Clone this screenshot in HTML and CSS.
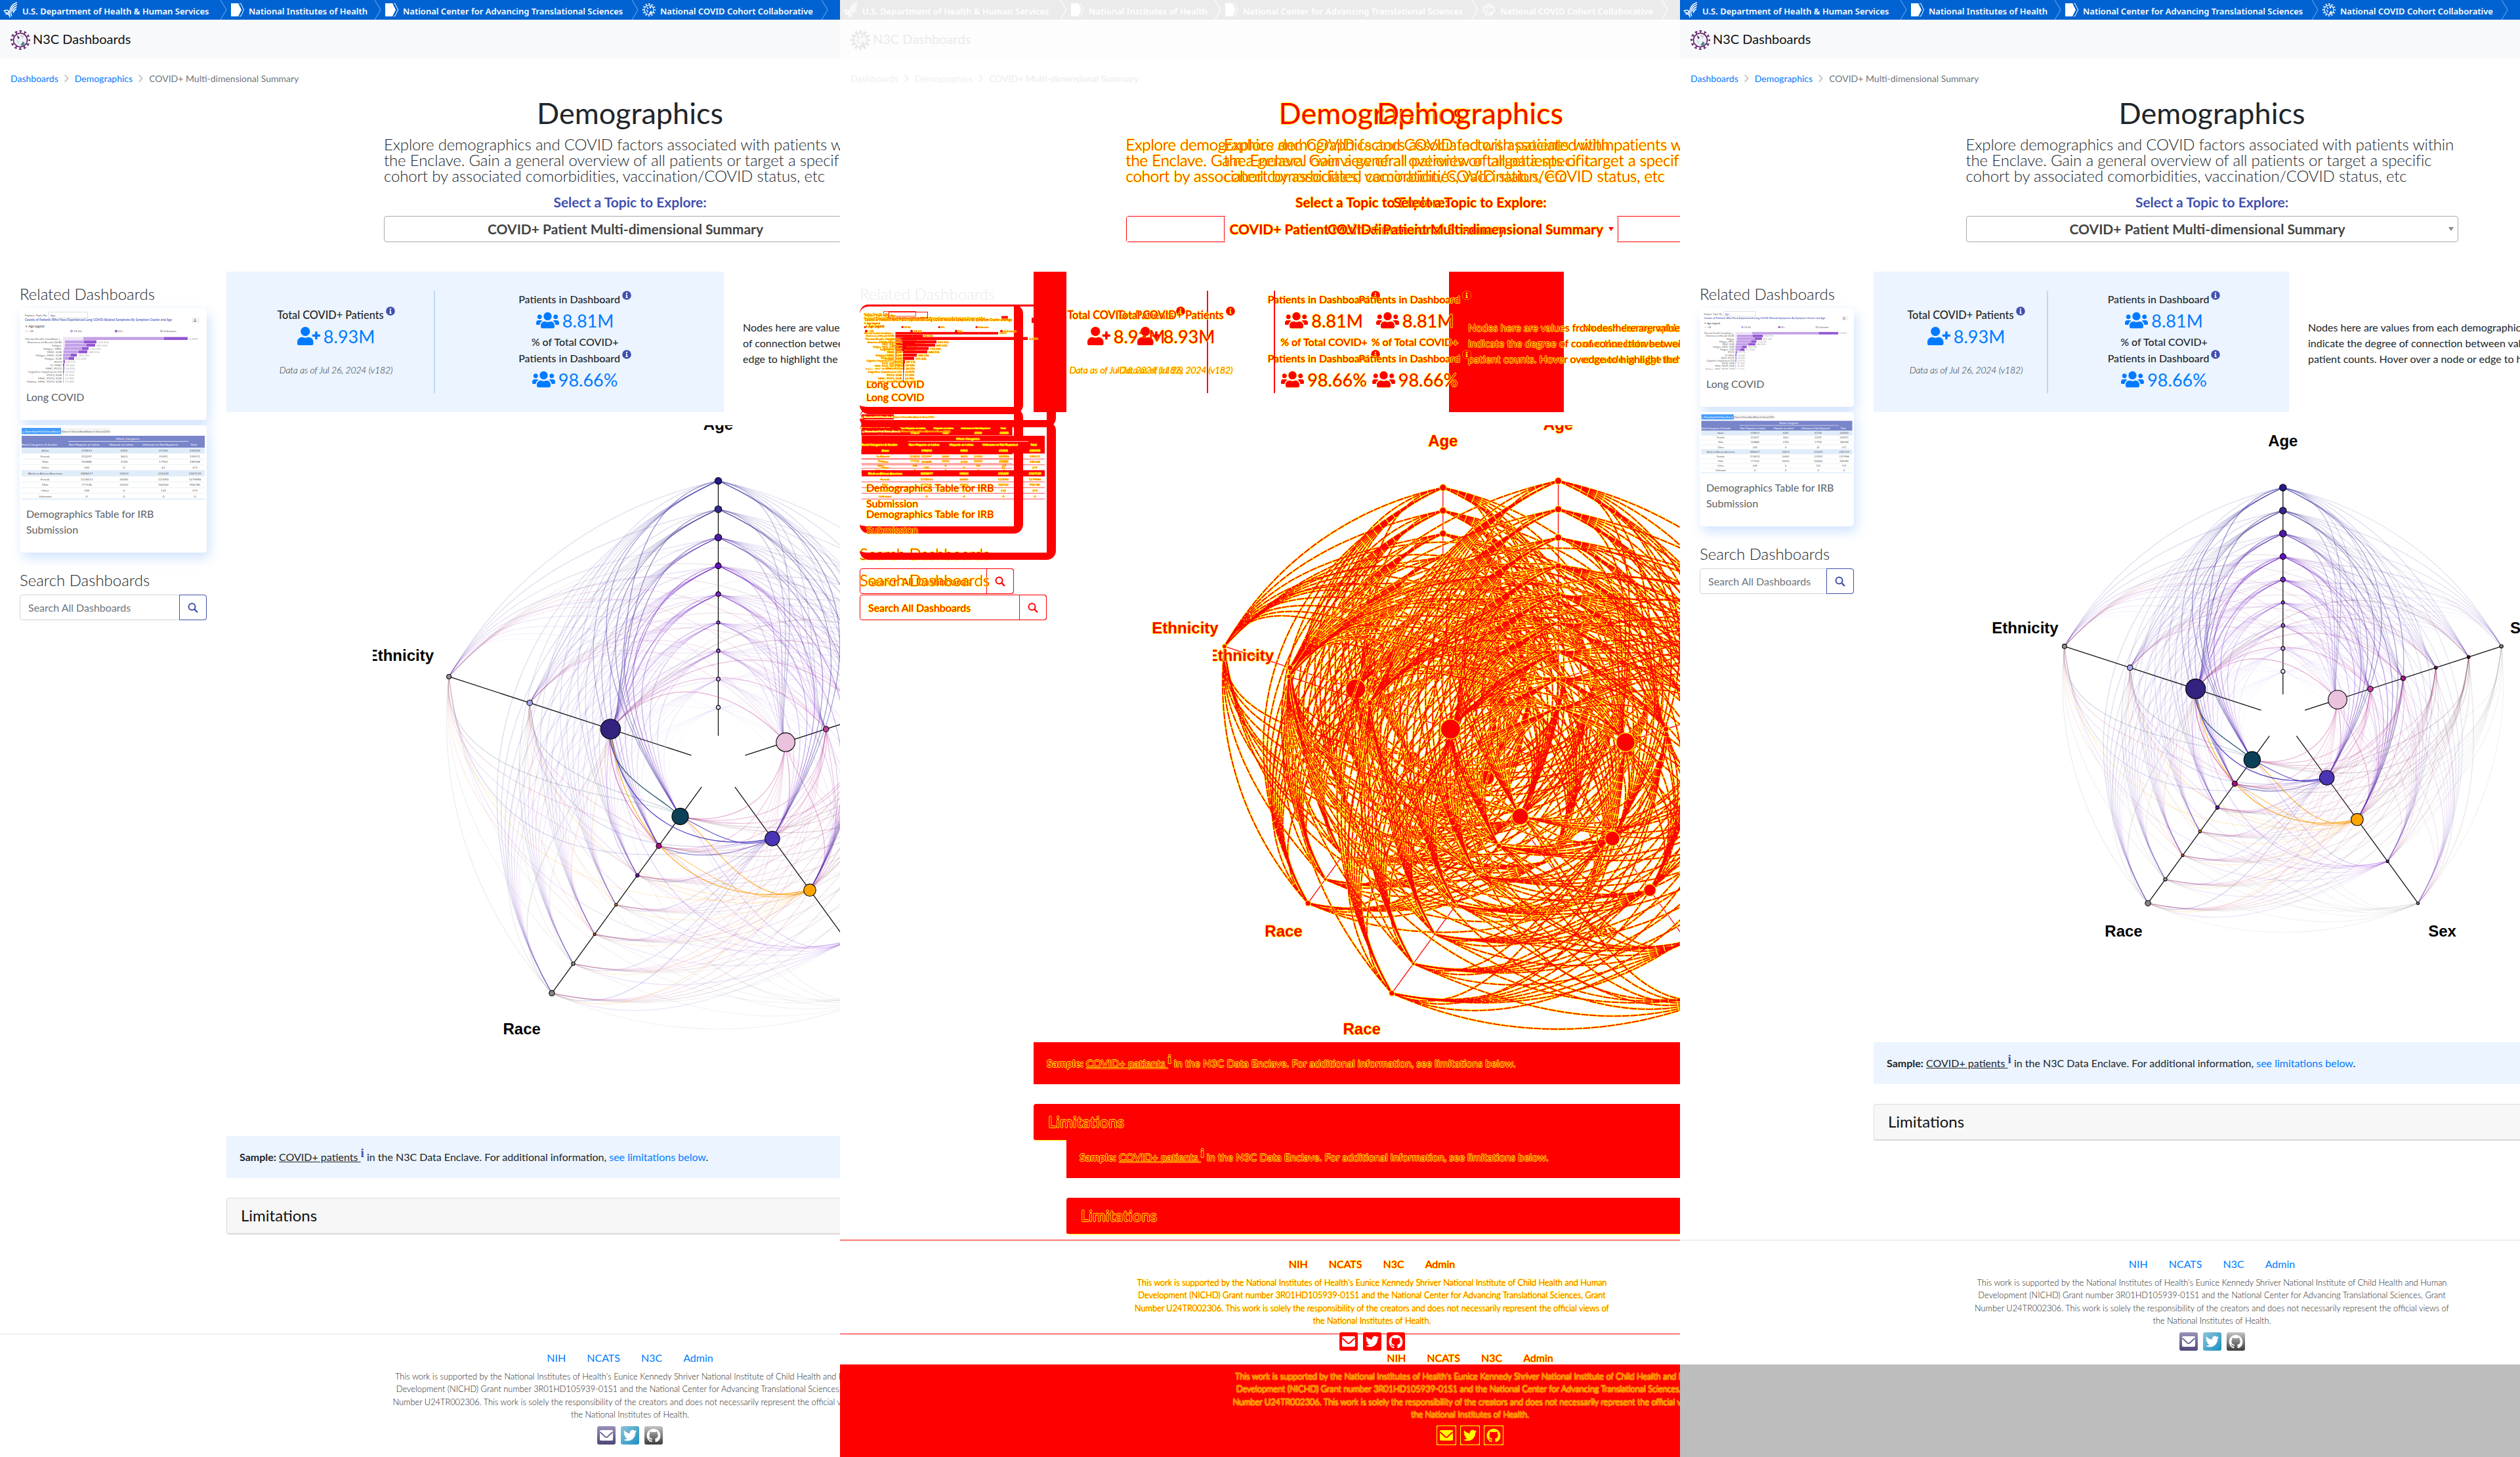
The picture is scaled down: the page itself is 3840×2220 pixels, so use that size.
FILE: index.html
```html
<!DOCTYPE html>
<html lang="en">
<head>
<meta charset="utf-8">
<title>N3C Dashboards</title>
<link rel="stylesheet" href="styles.css">
</head>
<body>
<svg class="defs" width="0" height="0" aria-hidden="true">
  <defs>
    <linearGradient id="g-mail" x1="0" y1="0" x2="0" y2="1"><stop offset="0" stop-color="#9a92b8"/><stop offset="1" stop-color="#4e4778"/></linearGradient>
    <linearGradient id="g-bird" x1="0" y1="0" x2="1" y2="1"><stop offset="0" stop-color="#8cc4da"/><stop offset="1" stop-color="#1a8fc0"/></linearGradient>
    <linearGradient id="g-cat" x1="0" y1="0" x2="0" y2="1"><stop offset="0" stop-color="#c4c4c4"/><stop offset="1" stop-color="#3c3c3c"/></linearGradient>
    <symbol id="i-hhs" viewBox="0 0 22 24">
      <g fill="none" stroke="#fff" stroke-width="1.500" stroke-linecap="round"><path d="M20.500 1C15 3 12 6 11 10"/><path d="M20.500 4C16 5.500 13.500 8 12.500 12"/><path d="M20 7.500C16.500 9 14.500 11 14 14"/><path d="M19.500 11C17.500 12 16 13.500 15.500 16"/><path d="M1 13.500C6 11.500 9 13 8 16C7 17.500 3 17 2.500 15"/><path d="M11 10C9 14 8 17 10 23"/><path d="M12.500 12C11 15 11 17 12.500 21"/><path d="M4 18.500C7 18 9 19 9.500 21"/></g>
    </symbol>
    <symbol id="i-tag" viewBox="0 0 20 20"><path d="M0 0H11L16 10L11 20H0Z" fill="#fff"/><path d="M13 .500H15L19.500 10L15 19.500H13" fill="none" stroke="#fff"/></symbol>
    <symbol id="i-virus" viewBox="0 0 30 30">
      <circle cx="15" cy="15" r="10.500" fill="var(--v-in)" stroke="var(--v)" stroke-width="1.600"/>
      <circle cx="15" cy="15" r="12.500" fill="none" stroke="var(--v)" stroke-width="4" stroke-dasharray="2 4.545" stroke-dashoffset="1"/>
      <circle cx="15" cy="15" r="14.200" fill="none" stroke="var(--v)" stroke-width="1.500" stroke-dasharray="4 3.435" stroke-dashoffset="2"/>
      <path d="M9 7L14 11L12 14Z" fill="var(--v)"/><path d="M15 7L21 8L18 13Z" fill="var(--v-a)"/><path d="M15 23L19 17L22 20L19 24Z" fill="var(--v-b)"/><path d="M8 14L13 17L12 22Z" fill="var(--v-c)"/>
    </symbol>
    <symbol id="i-users" viewBox="0 0 640 512"><path d="M96 224c35.300 0 64-28.700 64-64s-28.700-64-64-64-64 28.700-64 64 28.700 64 64 64zm448 0c35.300 0 64-28.700 64-64s-28.700-64-64-64-64 28.700-64 64 28.700 64 64 64zm32 32h-64c-17.600 0-33.500 7.100-45.100 18.600 40.300 22.100 68.900 62 75.100 109.400h66c17.700 0 32-14.300 32-32v-32c0-35.300-28.700-64-64-64zm-256 0c61.900 0 112-50.100 112-112S381.900 32 320 32 208 82.100 208 144s50.100 112 112 112zm76.800 32h-8.300c-20.800 10-43.900 16-68.500 16s-47.600-6-68.500-16h-8.300C179.600 288 128 339.600 128 403.200V432c0 26.500 21.500 48 48 48h288c26.500 0 48-21.500 48-48v-28.800c0-63.600-51.600-115.200-115.200-115.200zm-223.700-13.400C161.500 263.100 145.600 256 128 256H64c-35.300 0-64 28.700-64 64v32c0 17.700 14.300 32 32 32h65.900c6.300-47.400 34.900-87.300 75.200-109.400z"/></symbol>
    <symbol id="i-plus" viewBox="0 0 640 512"><path d="M624 208h-64v-64c0-8.800-7.200-16-16-16h-32c-8.800 0-16 7.200-16 16v64h-64c-8.800 0-16 7.200-16 16v32c0 8.800 7.200 16 16 16h64v64c0 8.800 7.200 16 16 16h32c8.800 0 16-7.200 16-16v-64h64c8.800 0 16-7.200 16-16v-32c0-8.800-7.200-16-16-16zm-400 48c70.700 0 128-57.300 128-128S294.700 0 224 0 96 57.300 96 128s57.300 128 128 128zm89.600 32h-16.700c-22.200 10.200-46.900 16-72.900 16s-50.600-5.800-72.900-16h-16.700C60.200 288 0 348.200 0 422.400V464c0 26.500 21.500 48 48 48h352c26.500 0 48-21.500 48-48v-41.600c0-74.200-60.200-134.400-134.400-134.400z"/></symbol>
    <symbol id="i-info" viewBox="0 0 14 14"><circle cx="7" cy="7" r="6.800"/><path d="M5.500 6H7.900V9.800H8.800V11H5.300V9.800H6.200V7.200H5.500Z" fill="var(--info-i)"/><circle cx="7" cy="3.900" r="1.200" fill="var(--info-i)"/></symbol>
    <symbol id="i-search" viewBox="0 0 16 16"><circle cx="6.500" cy="6.500" r="5" fill="none" stroke="currentColor" stroke-width="2"/><path d="M10.300 10.300L15 15" stroke="currentColor" stroke-width="2.400"/></symbol>
    <symbol id="i-mail" viewBox="0 0 28 28"><rect width="28" height="28" rx="3" fill="var(--m, url(#g-mail))"/><path d="M4 8C4 6.800 4.800 6 6 6H22C23.200 6 24 6.800 24 8V20C24 21.200 23.200 22 22 22H6C4.800 22 4 21.200 4 20Z" fill="var(--glyph)"/><path d="M4.500 9L12 16Q14 17.800 16 16L23.500 9" fill="none" stroke="var(--m, #6c6596)" stroke-width="1.800"/></symbol>
    <symbol id="i-bird" viewBox="0 0 28 28"><rect width="28" height="28" rx="3" fill="var(--m, url(#g-bird))"/><path transform="translate(3.800 3.800) scale(.04)" fill="var(--glyph)" d="M459.370 151.716c.325 4.548.325 9.097.325 13.645 0 138.720-105.583 298.558-298.558 298.558-59.452 0-114.680-17.219-161.137-47.106 8.447.974 16.568 1.299 25.340 1.299 49.055 0 94.213-16.568 130.274-44.832-46.132-.975-84.792-31.188-98.112-72.772 6.498.974 12.995 1.624 19.818 1.624 9.421 0 18.843-1.300 27.614-3.573-48.081-9.747-84.143-51.980-84.143-102.985v-1.299c13.969 7.797 30.214 12.670 47.431 13.319-28.264-18.843-46.781-51.005-46.781-87.391 0-19.492 5.197-37.360 14.294-52.954 51.655 63.675 129.300 105.258 216.365 109.807-1.624-7.797-2.599-15.918-2.599-24.040 0-57.828 46.782-104.934 104.934-104.934 30.213 0 57.502 12.670 76.670 33.137 23.715-4.548 46.456-13.320 66.599-25.340-7.798 24.366-24.366 44.833-46.132 57.827 21.117-2.273 41.584-8.122 60.426-16.243-14.292 20.791-32.161 39.308-52.628 54.253z"/></symbol>
    <symbol id="i-cat" viewBox="0 0 28 28"><rect width="28" height="28" rx="3" fill="var(--m, url(#g-cat))"/><path transform="translate(3.600 4) scale(1.300)" fill="var(--glyph)" d="M8 0C3.580 0 0 3.580 0 8c0 3.540 2.290 6.530 5.470 7.590.4.070.55-.170.55-.380 0-.190-.010-.820-.010-1.490-2.010.370-2.530-.490-2.690-.940-.090-.230-.480-.940-.820-1.130-.280-.150-.680-.520-.010-.530.630-.010 1.080.580 1.230.820.720 1.210 1.870.870 2.330.660.070-.520.280-.870.510-1.070-1.780-.2-3.640-.890-3.640-3.950 0-.870.310-1.590.820-2.150-.080-.2-.360-1.020.080-2.120 0 0 .670-.210 2.200.820.640-.180 1.320-.270 2-.270s1.360.090 2 .270c1.530-1.040 2.200-.820 2.200-.820.440 1.100.160 1.920.080 2.120.510.560.820 1.270.820 2.150 0 3.070-1.870 3.750-3.650 3.950.290.250.540.730.540 1.480 0 1.070-.010 1.930-.010 2.200 0 .210.150.460.550.380A8.010 8.010 0 0 0 16 8c0-4.420-3.580-8-8-8z"/></symbol>
  </defs>
</svg>

<template id="page-markup">
  <div class="topbar same">
    <a class="agency hhs"><svg><use href="#i-hhs"/></svg><span>U.S. Department of Health &amp; Human Services</span></a>
    <svg class="sep" viewBox="0 0 11 30"><path d="M1 0L10 15L1 30"/></svg>
    <a class="agency nih"><svg><use href="#i-tag"/></svg><span>National Institutes of Health</span></a>
    <svg class="sep" viewBox="0 0 11 30"><path d="M1 0L10 15L1 30"/></svg>
    <a class="agency ncats"><svg><use href="#i-tag"/></svg><span>National Center for Advancing Translational Sciences</span></a>
    <svg class="sep" viewBox="0 0 11 30"><path d="M1 0L10 15L1 30"/></svg>
    <a class="agency n3c"><svg><use href="#i-virus"/></svg><span>National COVID Cohort Collaborative</span></a>
    <svg class="sep" viewBox="0 0 11 30"><path d="M1 0L10 15L1 30"/></svg>
  </div>
  <div class="brandbar same"><svg><use href="#i-virus"/></svg><span>N3C Dashboards</span></div>
  <div class="crumbs same">
    <a>Dashboards</a><svg viewBox="0 0 8 12"><path d="M1.500 1L6 6L1.500 11"/></svg><a>Demographics</a><svg viewBox="0 0 8 12"><path d="M1.500 1L6 6L1.500 11"/></svg><span>COVID+ Multi-dimensional Summary</span>
  </div>
  <div class="intro">
    <h1>Demographics</h1>
    <p class="lead">Explore demographics and COVID factors associated with patients within<br>the Enclave. Gain a general overview of all patients or target a specific<br>cohort by associated comorbidities, vaccination/COVID status, etc</p>
    <div class="pick-label">Select a Topic to Explore:</div>
    <div class="pick"><span>COVID+ Patient Multi-dimensional Summary</span><i></i></div>
  </div>
  <div class="main">
    <aside>
      <h4 class="same">Related Dashboards</h4>
      <div class="card"><svg class="thumb chart" viewBox="0 0 285 113"></svg><p>Long COVID</p></div>
      <div class="card"><svg class="thumb table" viewBox="0 0 285 113"></svg><p>Demographics Table for IRB Submission</p></div>
      <h4 class="find">Search Dashboards</h4>
      <div class="search"><span>Search All Dashboards</span><b><svg><use href="#i-search"/></svg></b></div>
    </aside>
    <section>
      <div class="toprow">
        <div class="stats">
          <div class="stat total">
            <div class="cap">Total COVID+ Patients <svg><use href="#i-info"/></svg></div>
            <div class="num"><svg><use href="#i-plus"/></svg>8.93M</div>
            <em>Data as of Jul 26, 2024 (v182)</em>
          </div>
          <div class="stat">
            <div class="cap">Patients in Dashboard <svg><use href="#i-info"/></svg></div>
            <div class="num"><svg><use href="#i-users"/></svg>8.81M</div>
            <div class="cap">% of Total COVID+</div>
            <div class="cap">Patients in Dashboard <svg><use href="#i-info"/></svg></div>
            <div class="num"><svg><use href="#i-users"/></svg>98.66%</div>
          </div>
        </div>
        <p class="nodes"></p>
      </div>
      <svg class="hive"></svg>
      <div class="sample"><b>Sample:</b> <u>COVID+ patients </u><sup>i</sup> in the N3C Data Enclave. For additional information, <a>see limitations below</a>.</div>
      <div class="limits">Limitations</div>
    </section>
  </div>
  <footer>
    <nav><a>NIH</a><a>NCATS</a><a>N3C</a><a>Admin</a></nav>
    <p>This work is supported by the National Institutes of Health's Eunice Kennedy Shriver National Institute of Child Health and Human<br>Development (NICHD) Grant number 3R01HD105939-01S1 and the National Center for Advancing Translational Sciences, Grant<br>Number U24TR002306. This work is solely the responsibility of the creators and does not necessarily represent the official views of<br>the National Institutes of Health.</p>
    <div class="social"><svg><use href="#i-mail"/></svg><svg><use href="#i-bird"/></svg><svg><use href="#i-cat"/></svg></div>
  </footer>
  <div class="tail"></div>
</template>

<main class="compare">
  <div class="panel"><div class="page wide"></div></div>
  <div class="panel layered"><div class="page wide ghost"></div><div class="page narrow diff"></div><div class="page wide diff"></div></div>
  <div class="panel"><div class="page narrow"></div></div>
</main>
<script src="app.js"></script>
</body>
</html>
```

FILE: styles.css
```css
* { box-sizing: border-box; }
body { margin: 0; background: #fff; font-family: Lato, "Liberation Sans", sans-serif; font-size: 16px; line-height: 24px; color: #212529; }
h1, h4, p { margin: 0; font-weight: 400; }
.defs { position: absolute; }
.compare { display: grid; grid-template-columns: repeat(3, 1280px); height: 2220px; overflow: hidden; }
.panel { height: 2220px; overflow: hidden; background: #fff; isolation: isolate; }
.layered { display: grid; }
.layered > .page { grid-area: 1 / 1; }

.page {
  --v: #662a6b; --v-in: #eef3f6; --v-a: #d8c6dd; --v-b: #4f8793; --v-c: #c9dbe0;
  --info-i: #fff; --glyph: #fff;
  --blue: #007bff; --indigo: #4150ad;
  display: flex; flex-direction: column; height: 2222px;
}
.wide { width: 1920px; --side: 345px; --card: 285px; --stats: 758px; --pad: 223px; --hive: 1083px; }
.narrow { width: 1621px; --side: 295px; --card: 235px; --stats: 633px; --pad: 150px; --hive: 940px; }

.topbar { display: flex; flex: none; height: 30px; background: #0063d1; color: #fff; font: 600 13px/34px "Noto Sans", "Open Sans", sans-serif; white-space: nowrap; }
.agency { display: flex; --v: #fff; --v-in: none; --v-a: #fff; --v-b: #fff; --v-c: #fff; }
.agency svg { width: 20px; height: 20px; margin: 5px 7px 0 8px; flex: none; }
.hhs svg { width: 22px; height: 24px; margin: 3px 7px 0 5px; }
.hhs { width: 335px; } .nih { width: 224px; } .ncats { width: 381px; } .n3c { width: 278px; }
.sep { width: 11px; height: 30px; flex: none; fill: none; stroke: #5a9ce6; stroke-width: 1.2; }
.sep + .agency svg { margin-left: 6px; }
.brandbar { flex: none; height: 59px; padding: 2px 0 0 16px; display: flex; align-items: center; gap: 4px; background: #f8f9fb; font-size: 20px; color: #111; }
.brandbar svg { width: 30px; height: 30px; }
.brandbar span { padding-bottom: 3px; }
.crumbs { flex: none; height: 42px; margin-bottom: 15px; padding: 20px 0 0 16px; display: flex; align-items: center; gap: 8px; font-size: 14px; color: #6c757d; }
.crumbs svg { width: 9px; height: 13px; fill: none; stroke: #ccc; stroke-width: 2; margin-top: -2px; }
a { color: var(--blue); }
.topbar a { color: inherit; }

.intro { flex: none; height: 223px; width: 750px; margin: 0 auto; display: flex; flex-direction: column; text-align: center; white-space: nowrap; }
h1 { font-size: 45px; line-height: 52px; margin-bottom: 10px; }
.lead { font-size: 24px; font-weight: 300; text-align: left; letter-spacing: -.16px; }
.pick-label { margin: 16px 0 9px; font-size: 21px; font-weight: 700; color: var(--indigo); }
.pick { height: 40px; border: 1px solid #aaa; border-radius: 4px; display: flex; align-items: center; padding: 0 6px 1px 0; font-size: 21px; font-weight: 700; color: #444; }
.pick span { flex: 1; }
.pick i { border: 4px solid transparent; border-top: 6px solid #888; border-bottom: 0; }

.main { flex: none; display: grid; grid-template-columns: var(--side) 1fr; padding-top: 45px; }
aside { padding: 19px 0 0 30px; width: calc(var(--card) + 30px); }
h4 { font-size: 24px; font-weight: 300; line-height: 29px; margin-bottom: 8px; white-space: nowrap; }
.find { margin: 27px 0 8px; }
.card { border-radius: 5px; background: #fff; box-shadow: 4px 8px 18px rgba(60, 140, 255, .24); margin-bottom: 8px; color: #5c6166; position: relative; }
.card p { padding: 10px 10px 23px; }
.thumb { display: block; width: 100%; font-family: Lato, sans-serif; }
.search { display: flex; height: 39px; border: 1px solid #ced4da; border-radius: 4px; line-height: 37px; color: #6c757d; }
.search span { flex: 1; padding-left: 12px; white-space: nowrap; }
.search b { width: 42px; margin: -1px; border: 1px solid var(--indigo); border-radius: 0 4px 4px 0; color: var(--indigo); display: flex; align-items: center; justify-content: center; }
.search svg { width: 16px; height: 16px; }

.toprow { display: flex; height: 214px; margin-bottom: 20px; }
.stats { flex: none; width: var(--stats); padding: 29px 14px 31px; background: #ebf4ff; display: grid; grid-template-columns: 5fr 7fr; text-align: center; white-space: nowrap; position: relative; }
.total { border-right: 2px solid #bcd8f5; padding: 24px 0 0 4px; }
.cap { font-weight: 500; }
.total .cap { font-size: 16.3px; }
.cap svg { width: 14px; height: 14px; fill: var(--indigo); vertical-align: 5px; margin-left: -1px; }
.num { font-size: 27px; line-height: 41px; color: var(--blue); display: flex; align-items: center; justify-content: center; gap: 5px; }
.num svg { width: 35px; height: 28px; fill: var(--blue); margin-bottom: 1px; }
em { display: block; margin-top: 19px; font-weight: 300; font-size: 14px; letter-spacing: -.15px; }
.nodes { padding: 73px 0 0 29px; white-space: nowrap; }
.hive { display: block; width: calc(100% - var(--pad)); margin-left: var(--pad); height: var(--hive); font: 700 24px "Liberation Sans", sans-serif; }
.sample { height: 64px; padding: 20px; background: #ebf4ff; white-space: nowrap; }
.sample sup { font: 700 19px/0 "Liberation Serif", serif; color: var(--indigo); vertical-align: 6px; }
.limits { height: 56px; margin-top: 30px; padding: 0 21px; line-height: 52px; font-size: 24px; color: #111; background: #f7f7f7; border: 1px solid #dcdcdc; border-bottom: 2px solid #d8d8d8; border-radius: 4px; }
footer { flex: none; height: 190px; margin-top: 151px; border-top: 1px solid #e2e2e2; padding-top: 24px; text-align: center; white-space: nowrap; }
nav { display: flex; justify-content: center; gap: 32px; margin-bottom: 7px; }
footer p { font-size: 12.8px; line-height: 19.4px; font-weight: 300; color: #222; }
.social { display: flex; justify-content: center; gap: 8px; margin-top: 7px; }
.social svg { width: 28px; height: 28px; }
.tail { height: 143px; flex: none; }
.narrow .tail { background: #bdbdbd; }

/* hive plot */
.axis { stroke: #111; stroke-width: 1.3; }
.link { fill: none; stroke-width: 1.3; }
.node { stroke: #000; stroke-width: 1.1; }

/* unchanged parts of the comparison */
.ghost > *, .ghost aside > *, .ghost section { visibility: hidden; }
.ghost .same { visibility: visible; color: #ebebeb; --blue: #efefef; --v: #e4e4e4; --v-in: #fafafa; --v-a: #eee; --v-b: #e8e8e8; --v-c: #eee; }
.ghost .topbar { background: #ebebeb; color: #fff; }
.ghost .sep { stroke: #fff; }
.ghost .crumbs svg { stroke: #f0f0f0; }
.ghost .brandbar { background: #fdfdfd; }
.ghost .agency { --v: #fff; }

/* changed parts of the comparison */
.diff { --blue: #f00; --indigo: #f00; --info-i: #ff0; --m: #f00; --glyph: #fff; color: #f00; text-shadow: .8px 0 #ff0, -.8px 0 #ff0, 0 .8px #ff0, 0 -.8px #ff0; }
.diff .same { visibility: hidden; }
.diff .pick, .diff .card, .diff .limits, .diff footer p { color: #f00; }
.diff .pick { border-color: transparent; background: linear-gradient(#f00, #f00) var(--end) 0 / 151px 1px border-box no-repeat, linear-gradient(#f00, #f00) var(--end) 100% / 151px 1px border-box no-repeat, linear-gradient(#f00, #f00) 0 0 / 1px 100% border-box no-repeat, linear-gradient(#f00, #f00) 100% 0 / 1px 100% border-box no-repeat; }
.narrow.diff { --end: 0; }
.wide.diff { --end: 100%; }
.diff .pick i { border-top-color: #f00; }
.diff .card { background: none; box-shadow: none; }
.diff .card::after { content: ""; position: absolute; inset: -6px -14px -11px 0; border: solid #f00; border-width: 3px 14px 11px 0; border-radius: 14px; }
.diff .search { border-color: #f00; color: #f00; }
.diff .stats { background: none; }
.diff .stats::before { content: ""; position: absolute; z-index: -1; top: 0; bottom: 0; background: #f00; }
.narrow.diff .stats::before { left: 0; width: 50px; }
.wide.diff .stats::before { right: 0; width: 175px; }
.diff .total { border-color: #f00; }
.diff .cap svg, .diff .num svg, .diff .social svg { filter: drop-shadow(0 0 .6px #ff0) drop-shadow(0 0 .6px #ff0); }
.diff .sample, .diff .limits { background: #f00; border-color: #f00; }
.diff .limits { border-bottom: 1px solid #ff0; }
.diff .sample sup { color: #f00; }
.diff footer { border-color: #f00; }
.wide.diff .social { --glyph: #ff0; }
.wide.diff .social svg { outline: 1px solid #ff0; }
.narrow.diff .tail { background: #f00; }
.diff .axis { stroke: #f00; }
.diff .node { fill: #f00; stroke: #ff0; }
.diff .hive text { fill: #f00; }
.diff .link { stroke: #f00; stroke-width: 1.7; stroke-dasharray: 11 1.5; }
.diff .halo { stroke: #ff0; stroke-width: 3.2; stroke-dasharray: none; }
```

FILE: app.js
```js
const rad = d => d * Math.PI / 180;

// Each axis: angle, label, and its nodes from the centre out: [radius, fill, weight, link colour]
const axes = [
  { at: 0, label: 'Age', nodes: [
    [3, '#eee2ff', .03, '#d9c8f5'], [2.9, '#c9a2f5', .08, '#b995ea'], [2.7, '#9b66da', .2, '#9a66d8'],
    [2.5, '#8442d0', .22, '#8546cf'], [3.7, '#7626c6', .34, '#7a30c8'], [4.5, '#6210be', .42, '#6a1cc0'],
    [5.2, '#4d1aa8', .44, '#532aaa'], [5.2, '#33298c', .44, '#3c3492'], [5.2, '#241a8c', .44, '#3830a0']] },
  { at: 72, label: 'Severity', nodes: [
    [14.3, '#eac2de', .45, '#cf62ab'], [4.2, '#c0409c', .24, '#c23c9a'], [3.5, '#a81580', .2, '#b02888'],
    [2.3, '#7c0f58', .12, '#8c2c6c'], [2.3, '#4c0c34', .12, '#703858'], [2.6, '#8c8c8c', .02, '#a4a4a4']] },
  { at: 144, label: 'Sex', nodes: [
    [11.2, '#4a34b4', .85, '#3c2cb8'], [9.3, '#ffa500', .8, '#ffa20a'], [2, '#6c1ac0', .12, '#8f30dc'], [2, '#888', .01, '#a4a4a4']] },
  { at: 216, label: 'Race', nodes: [
    [12.6, '#0b4058', .9, '#0b4460'], [4, '#a81080', .55, '#c02f90'], [2.6, '#7414c0', .18, '#8830d0'],
    [2, '#e09a10', .06, '#f0a020'], [2, '#e05030', .06, '#f06040'], [2.6, '#999', .06, '#999'], [4.2, '#848484', .12, '#888']] },
  { at: 288, label: 'Ethnicity', nodes: [
    [15.1, '#33227e', 1, '#33227e'], [4.2, '#a8a4f0', .12, '#a8a4f0'], [3.4, '#949494', .08, '#949494']] }
];

// The lower-ranked end of a pair lends the link its colour.
const rank = { Age: 0, Severity: 1, Sex: 2, Race: 3, Ethnicity: 4 };

function hive(svg, cx, cy, R) {
  const inner = R * .1;
  const pt = (a, r) => `${(cx + Math.sin(rad(a)) * r).toFixed(1)} ${(cy - Math.cos(rad(a)) * r).toFixed(1)}`;
  const radius = (ax, i) => inner + (R - inner) * (i + 1) / ax.nodes.length;
  let lines = '', halo = '', links = '', nodes = '', text = '';
  for (const ax of axes) {
    const [x1, y1] = pt(ax.at, inner).split(' '), [x2, y2] = pt(ax.at, R).split(' ');
    lines += `<line class="axis" x1="${x1}" y1="${y1}" x2="${x2}" y2="${y2}"/>`;
    ax.nodes.forEach((n, i) => {
      const [x, y] = pt(ax.at, radius(ax, i)).split(' ');
      nodes += `<circle class="node" cx="${x}" cy="${y}" r="${n[0]}" fill="${n[1]}"/>`;
    });
    const [tx, ty] = pt(ax.at, R * 1.18).split(' ');
    text += `<text x="${tx}" y="${ty}" text-anchor="middle">${ax.label}</text>`;
  }
  const diff = svg.closest('.diff');
  for (let s = axes.length - 1; s >= 0; s--) for (let t = s + 1; t < axes.length; t++) {
    const A = axes[s], B = axes[t];
    let turn = B.at - A.at;
    if (turn > 180) turn -= 360;
    A.nodes.forEach((p, i) => B.nodes.forEach((q, j) => {
      const r0 = radius(A, i), r1 = radius(B, j);
      const d = `M${pt(A.at, r0)}C${pt(A.at + turn / 3, r0)} ${pt(A.at + turn * 2 / 3, r1)} ${pt(B.at, r1)}`;
      const owner = rank[A.label] < rank[B.label] ? p : q;
      const o = Math.min(1, .13 + .85 * p[2] * q[2]);
      if (diff) halo += `<path class="link halo" d="${d}"/>`;
      links += `<path class="link" d="${d}" stroke="${owner[3]}" stroke-opacity="${diff ? 1 : o.toFixed(2)}"/>`;
    }));
  }
  svg.innerHTML = lines + halo + links + nodes + text;
}

function chartThumb(svg, diff) {
  const ink = diff ? '#f00' : '#666', c = diff ? ['#f00', '#f00', '#f00', '#f00'] : ['#ede4f7', '#c39fe8', '#9257d2', '#bbb'];
  const t = (x, y, s, f = ink, e = '') => `<text x="${x}" y="${y}" font-size="4.6" fill="${f}" ${e}>${s}</text>`;
  const box = diff ? 'stroke="#f00"' : 'stroke="#ddd"';
  let o = t(8, 12, 'Explore Topic By') + `<rect x="44.500" y="5.500" width="59" height="9" fill="none" ${box}/>` + t(47, 12, 'Age', diff ? ink : '#5563c1')
    + t(8, 19, 'Counts of Patients Who Have Experienced Long COVID-Related Symptoms By Symptom Cluster and Age', diff ? ink : '#5563c1', 'textLength="224" font-weight="700"')
    + t(8, 29, '▼ Age Legend', ink, 'font-weight="700"')
    + `<rect x="262" y="14" width="12" height="8" fill="${diff ? '#f00' : '#f2f2f2'}"/><path d="M265 19.500h4M267 15.500v3" stroke="${ink}"/>`;
  [[8, '&lt;18', 0], [77, '18-64', 1], [145, '65+', 2], [214, 'Unknown', 3]].forEach(([x, s, k]) => o += `<circle cx="${x + 2}" cy="34.500" r="2" fill="${c[k]}"/>` + t(x + 5, 36, s));
  const rows = [['Mental Health Condition (...', 31, 123, 36, '3.49M'], ['Shortness of Breath (SOB)', 3, 29, 19, '943.92k'], ['Fatigue', 3, 33, 13, '891.02k'], ['Fatigue, MHC', 2, 27, 10, '710.24k'], ['MHC, SOB', 1, 23, 13, '680.92k'], ['Fatigue, MHC, SOB', 0, 12, 9, '382.16k'], ['Fatigue, SOB', 0, 9, 8, '311.64k'], ['POTS', 0, 1, 2, '49.17k'], ['CI, MHC', 0, 0, 2, '30.64k'], ['MHC, POTS', 0, 1, 1, '26.01k'], ['Cognitive Impairment (CI)', 0, 0, 1.500, '22.87k'], ['POTS, SOB', 0, 1, 0, '21.92k'], ['MHC, POTS, SOB', 0, 1, 0, '14.90k'], ['Fatigue, MHC, POTS, SOB', 0, 1, 0, '13.06k']];
  rows.forEach(([s, a, b, d, v], i) => {
    const y = 43.500 + i * 5.070;
    o += t(64, y + 4, s, ink, 'text-anchor="end"');
    let x = 66;
    [a, b, d].forEach((w, k) => { o += `<rect x="${x}" y="${y}" width="${w}" height="4.500" fill="${c[k]}"/>`; x += w; });
    o += t(x + 2, y + 4, v, diff ? ink : '#aaa');
  });
  svg.innerHTML = o;
}

function tableThumb(svg, diff) {
  const R = '#f00', ink = diff ? R : '#555';
  const t = (x, y, s, f = ink, e = 'text-anchor="middle"') => `<text x="${x}" y="${y}" font-size="4.600" fill="${f}" ${e}>${s}</text>`;
  let o = `<rect x="3" y="4" width="60" height="9.500" fill="${diff ? R : '#449cfb'}"/>` + t(33, 10.500, '⤓ Download Full Data (Excel)', '#fff')
    + `<rect x="65" y="4" width="35" height="9" fill="${diff ? 'none' : '#f5f5f5'}"/>` + t(83, 10.500, 'Data in View (Excel)')
    + `<rect x="102" y="4" width="35" height="9" fill="${diff ? 'none' : '#f5f5f5'}"/>` + t(119, 10.500, 'Data in View (CSV)')
    + `<rect x="3" y="16" width="279" height="18" fill="${diff ? R : '#7885c9'}"/><path d="M74 24.500H257" stroke="#fff" stroke-width=".7"/>`
    + [['Ethnic Categories', 165, 22], ['Racial Categories & Gender', 30, 31], ['Non-Hispanic or Latino', 98, 31], ['Hispanic or Latino', 155, 31], ['Unknown or Not Reported', 214, 31], ['Total', 265, 31]].map(([s, x, y]) => t(x, y, s.replace('&', '&amp;'), diff ? '#ff0' : '#fff')).join('');
  [['Asian', 376413, 6363, 41254, 424030], ['Female', 212297, 3623, 23291, 239211], ['Male', 163886, 2740, 17922, 184548], ['Other', 230, 0, 41, 271], ['Black or African American', 1896077, 59633, 231429, 2187139], ['Female', 1118313, 34581, 127092, 1279986], ['Male', 777526, 25052, 104202, 906780], ['Other', 238, 0, 135, 373], ['Unknown', 0, 0, 0, 0]].forEach((r, i) => {
    const y = 34 + i * 8.700, head = i % 4 === 0 && i < 8;
    o += `<rect x="3" y="${y}" width="279" height="8.700" fill="${head ? (diff ? R : '#dfecf9') : 'none'}"/><path d="M3 ${y + 8.700}H282" stroke="${diff ? R : i === 8 ? '#a8d0f8' : '#e4e8ec'}" stroke-width=".7"/>`;
    [39, 102, 159, 219, 267].forEach((x, k) => o += t(x, y + 6, r[k], diff && head ? '#ff0' : ink));
  });
  svg.innerHTML = o;
}

const notes = {
  wide: 'Nodes here are values from each demographic. The edges indicate the degree<br>of connection between values based on patient counts. Hover over a node or<br>edge to highlight the relationships.',
  narrow: 'Nodes here are values from each demographic. The edges<br>indicate the degree of connection between values based on<br>patient counts. Hover over a node or edge to highlight them.'
};

document.querySelectorAll('.page').forEach(page => {
  page.append(document.getElementById('page-markup').content.cloneNode(true));
  const wide = page.classList.contains('wide'), diff = page.classList.contains('diff');
  page.querySelector('.nodes').innerHTML = notes[wide ? 'wide' : 'narrow'];
  if (page.classList.contains('ghost')) return;
  const svg = page.querySelector('.hive');
  if (wide) hive(svg, 526.5, 516.2, 431.5); else hive(svg, 473.8, 445, 350);
  chartThumb(page.querySelector('.chart'), diff);
  tableThumb(page.querySelector('.table'), diff);
});
```
